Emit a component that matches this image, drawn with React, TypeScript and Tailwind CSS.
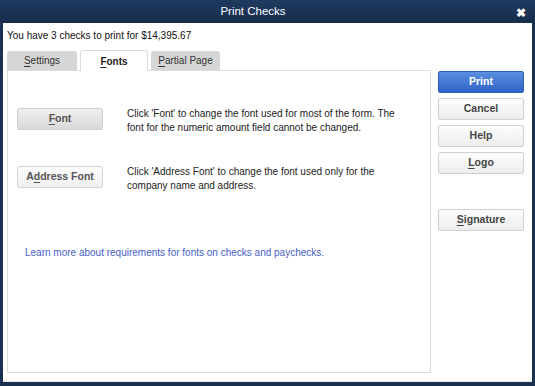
import React from "react";

const font = { fontFamily: '"Liberation Sans", Arial, sans-serif' };

function Key({ children }: { children: React.ReactNode }) {
  return <span className="underline underline-offset-[2px]">{children}</span>;
}

function SideButton({ children, primary }: { children: React.ReactNode; primary?: boolean }) {
  return (
    <button
      className={
        primary
          ? "h-[22px] w-[86px] rounded-[2px] border border-[#2f5fb8] bg-gradient-to-b from-[#5b8fe0] to-[#2f63c6] text-[10.5px] font-bold text-white"
          : "h-[22px] w-[86px] rounded-[2px] border border-[#d0d0d0] bg-gradient-to-b from-[#fdfdfd] to-[#ededed] text-[10.5px] font-bold text-[#444]"
      }
    >
      {children}
    </button>
  );
}

export default function App() {
  return (
    <div className="flex h-[386px] w-[535px] flex-col bg-[#1a3152]" style={font}>
      {/* title bar */}
      <div className="relative flex h-[23px] items-center justify-center bg-gradient-to-b from-[#1f3a60] to-[#172d4d] pr-[29px]">
        <span className="text-[11.5px] text-white">Print Checks</span>
        <span className="absolute right-[9px] top-[4px] text-[12px] font-bold text-white">✖</span>
      </div>

      <div className="mx-[3px] mb-[4px] flex-1 border-b border-[#e8e8e8] bg-white pl-[4px] pt-[6px]">
        <p className="h-[15px] text-[10px] leading-[13px] text-[#111]">You have 3 checks to print for $14,395.67</p>

        <div className="mt-[6px] flex gap-[7px]">
          {/* left side: tabs + panel */}
          <div className="flex w-[424px] flex-col">
            <div className="flex h-[20px] items-end gap-[3px]">
              <div className="flex h-[19px] w-[70px] items-center justify-center rounded-t-[3px] bg-[#d6d6d6] text-[10px] text-[#333]">
                <Key>S</Key>ettings
              </div>
              <div className="relative z-10 -mb-px flex h-[21px] w-[68px] items-center justify-center rounded-t-[3px] border border-b-0 border-[#dcdcdc] bg-white text-[10px] font-bold text-[#222]">
                <Key>F</Key>onts
              </div>
              <div className="flex h-[19px] w-[69px] items-center justify-center rounded-t-[3px] bg-[#d6d6d6] text-[10px] text-[#333]">
                <Key>P</Key>artial Page
              </div>
            </div>
            <div className="h-[303px] border border-[#dedbd5] pl-[9px] pt-[37px]">
              <div className="flex items-start">
                <button className="h-[22px] w-[86px] rounded-[2px] border border-[#cfcfcf] bg-gradient-to-b from-[#f0f0f0] to-[#d9d9d9] text-[10.5px] font-bold text-[#555]">
                  <Key>F</Key>ont
                </button>
                <p className="ml-[24px] mt-[-1px] text-[10px] leading-[14px] text-[#222]">
                  Click 'Font' to change the font used for most of the form. The
                  <br />
                  font for the numeric amount field cannot be changed.
                </p>
              </div>
              <div className="mt-[31px] flex items-start">
                <button className="h-[22px] w-[86px] rounded-[2px] border border-[#d6d6d6] bg-gradient-to-b from-[#fdfdfd] to-[#efefef] text-[10.5px] font-bold text-[#555]">
                  A<Key>d</Key>dress Font
                </button>
                <p className="ml-[24px] mt-[-1px] text-[10px] leading-[14px] text-[#222]">
                  Click 'Address Font' to change the font used only for the
                  <br />
                  company name and address.
                </p>
              </div>
              <p className="ml-[8px] mt-[52px] text-[10px] text-[#4560c6]">
                Learn more about requirements for fonts on checks and paychecks.
              </p>
            </div>
          </div>

          {/* right side buttons */}
          <div className="mt-[21px] flex flex-col gap-[5px]">
            <SideButton primary>Print</SideButton>
            <SideButton>Cancel</SideButton>
            <SideButton>Help</SideButton>
            <SideButton>
              <Key>L</Key>ogo
            </SideButton>
            <div className="mt-[27px]">
              <SideButton>
                <Key>S</Key>ignature
              </SideButton>
            </div>
          </div>
        </div>
      </div>
    </div>
  );
}
